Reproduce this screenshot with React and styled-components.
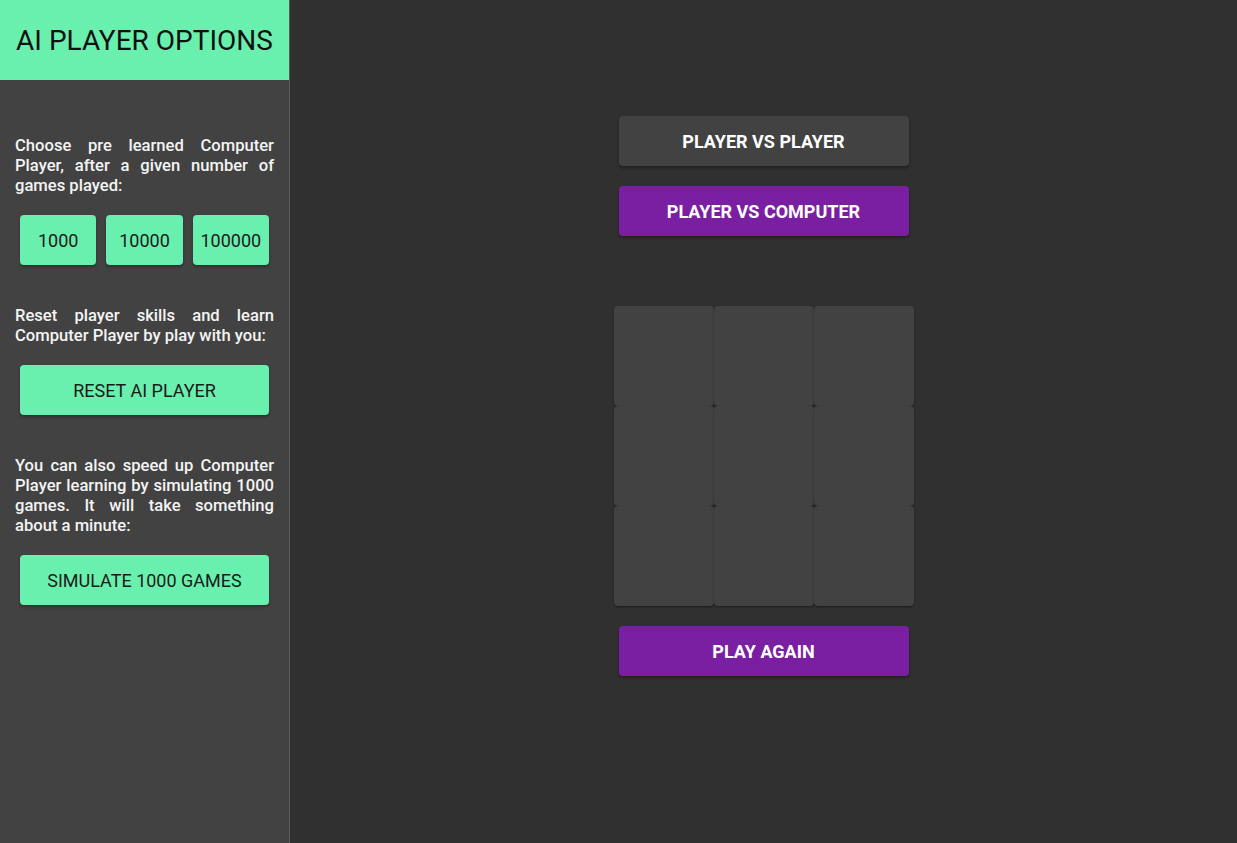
import React, { useState } from 'react';
import styled, { createGlobalStyle } from 'styled-components';

const GlobalStyle = createGlobalStyle`
  html, body {
    margin: 0;
    padding: 0;
    height: 100%;
    background: #303030;
    font-family: Roboto, "Liberation Sans", sans-serif;
  }
  #root {
    height: 100%;
  }
`;

const Layout = styled.div`
  display: flex;
  height: 843px;
  background: #303030;
`;

const Sidebar = styled.aside`
  width: 289px;
  flex-shrink: 0;
  background: #424242;
  border-right: 1px solid #5a5a5a;
  display: flex;
  flex-direction: column;
`;

const SidebarHeader = styled.h1`
  margin: 0;
  height: 80px;
  background: #69f0ae;
  color: #111;
  font-size: 28px;
  font-weight: 400;
  display: flex;
  align-items: center;
  justify-content: center;
`;

const SidebarBody = styled.div`
  padding: 56px 15px 0;
  display: flex;
  flex-direction: column;
`;

const Text = styled.p`
  margin: ${p => p.$first ? '0' : '36px'} 0 14px;
  color: #f4f4f4;
  font-size: 16.6px;
  font-weight: 500;
  line-height: 20px;
  text-align: justify;
`;

const ButtonRow = styled.div`
  display: flex;
`;

const GreenButton = styled.button`
  flex: 1;
  margin: 5px;
  height: 50px;
  padding: 0;
  border: none;
  border-radius: 4px;
  background: #69f0ae;
  color: #1a1a1a;
  font-family: inherit;
  font-size: 18px;
  text-transform: uppercase;
  box-shadow: 0 2px 3px rgba(0, 0, 0, 0.3);
  cursor: pointer;
`;

const Main = styled.main`
  flex: 1;
  display: flex;
  flex-direction: column;
  align-items: center;
  padding-top: 111px;
`;

const ModeButton = styled.button`
  width: 290px;
  height: 50px;
  margin: 5px 0 15px;
  border: none;
  border-radius: 4px;
  background: ${p => p.$active ? '#7b1fa2' : '#424242'};
  color: #fff;
  font-family: inherit;
  font-size: 18px;
  font-weight: 700;
  text-transform: uppercase;
  box-shadow: 0 2px 3px rgba(0, 0, 0, 0.35);
  cursor: pointer;
`;

const Board = styled.div`
  margin: 55px 0 15px;
  display: grid;
  grid-template-columns: repeat(3, 100px);
  grid-template-rows: repeat(3, 100px);
`;

const Cell = styled.div`
  background: #424242;
  border-radius: 4px;
  box-shadow: 0 1px 2px rgba(0, 0, 0, 0.45);
`;

export default function App() {
  const [mode, setMode] = useState('computer');
  const [cells] = useState(Array(9).fill(null));

  return (
    <Layout>
      <GlobalStyle />
      <Sidebar>
        <SidebarHeader>AI PLAYER OPTIONS</SidebarHeader>
        <SidebarBody>
          <Text $first>Choose pre learned Computer Player, after a given number of games played:</Text>
          <ButtonRow>
            <GreenButton>1000</GreenButton>
            <GreenButton>10000</GreenButton>
            <GreenButton>100000</GreenButton>
          </ButtonRow>
          <Text>Reset player skills and learn Computer Player by play with you:</Text>
          <ButtonRow>
            <GreenButton>Reset AI Player</GreenButton>
          </ButtonRow>
          <Text>You can also speed up Computer Player learning by simulating 1000 games. It will take something about a minute:</Text>
          <ButtonRow>
            <GreenButton>Simulate 1000 games</GreenButton>
          </ButtonRow>
        </SidebarBody>
      </Sidebar>
      <Main>
        <ModeButton $active={mode === 'player'} onClick={() => setMode('player')}>Player vs Player</ModeButton>
        <ModeButton $active={mode === 'computer'} onClick={() => setMode('computer')}>Player vs Computer</ModeButton>
        <Board>
          {cells.map((c, i) => <Cell key={i}>{c}</Cell>)}
        </Board>
        <ModeButton $active>Play again</ModeButton>
      </Main>
    </Layout>
  );
}
